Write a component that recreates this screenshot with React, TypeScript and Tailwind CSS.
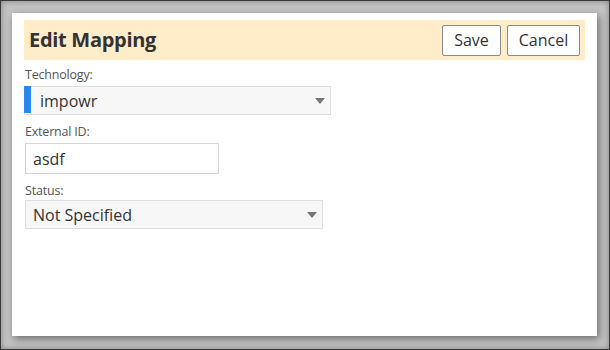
import React from "react";

function Caret() {
  return (
    <svg width="10" height="6" viewBox="0 0 10 6" className="shrink-0">
      <path d="M0 0 H10 L5 6 Z" fill="#777" />
    </svg>
  );
}

export default function App() {
  const font = { fontFamily: '"Open Sans", "Noto Sans", sans-serif' };
  return (
    <div
      className="w-[610px] h-[350px] bg-[#c4c4c4] border border-[#3a3a3a] shadow-[inset_0_0_6px_rgba(0,0,0,0.35)] pt-[12px] pl-[11px] pr-[12px] pb-[13px] box-border"
      style={font}
    >
      <div className="w-[585px] h-[323px] bg-white shadow-[2px_3px_8px_rgba(0,0,0,0.45)] pt-[7px] px-[12px]">
        <div className="h-[40px] bg-[#ffecc9] flex items-center justify-between pl-[5px] pr-[5px]">
          <h1 className="text-[20px] font-bold text-[#333] tracking-[-0.3px]">Edit Mapping</h1>
          <div className="flex gap-[6px]">
            <button className="w-[59px] h-[31px] border border-[#8a8a8a] rounded-[2px] bg-white text-[16px] text-[#333]">
              Save
            </button>
            <button className="w-[73px] h-[31px] border border-[#8a8a8a] rounded-[2px] bg-white text-[16px] text-[#333]">
              Cancel
            </button>
          </div>
        </div>

        <div className="mt-[6px] pl-[1px] text-[12.5px] leading-[17px] text-[#555] tracking-[-0.2px]">Technology:</div>
        <div className="mt-[3px] w-[307px] h-[29px] bg-[#f7f7f7] border border-[#dedede] flex items-center">
          <div className="w-[7px] h-full bg-[#2b88ef] -ml-px -my-px self-stretch" />
          <span className="ml-[9px] text-[16px] text-[#333] flex-1">impowr</span>
          <span className="mr-[5px]"><Caret /></span>
        </div>

        <div className="mt-[8px] pl-[1px] text-[12.5px] leading-[17px] text-[#555] tracking-[-0.2px]">External ID:</div>
        <div className="mt-[3px] ml-[1px] w-[194px] h-[31px] bg-white border border-[#d6d6d6] flex items-center">
          <span className="ml-[7px] text-[16px] text-[#333]">asdf</span>
        </div>

        <div className="mt-[8px] pl-[1px] text-[12.5px] leading-[17px] text-[#555] tracking-[-0.2px]">Status:</div>
        <div className="mt-[1px] ml-[1px] w-[298px] h-[29px] bg-[#f7f7f7] border border-[#dedede] flex items-center">
          <span className="ml-[7px] text-[16px] text-[#333] flex-1">Not Specified</span>
          <span className="mr-[5px]"><Caret /></span>
        </div>
      </div>
    </div>
  );
}
